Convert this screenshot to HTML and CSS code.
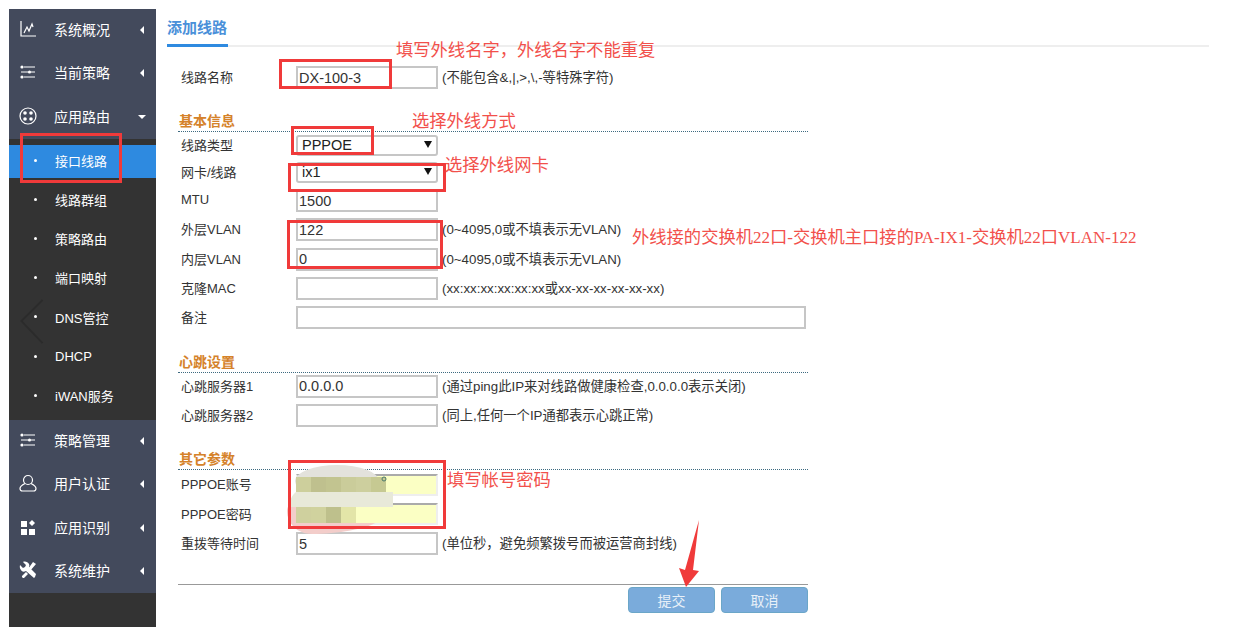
FILE: index.html
```html
<!DOCTYPE html>
<html lang="zh">
<head>
<meta charset="utf-8">
<title>添加线路</title>
<link rel="stylesheet" href="styles.css">
</head>
<body>
<div class="page">
  <nav class="sidebar">
    <div class="menu first"><svg class="ico" viewBox="0 0 16 16"><path d="M1 0v15h15M4 12l3-6 2 4 3-7 1 3" /></svg><span class="mt">系统概况</span><i class="arrow"></i></div>
    <div class="menu"><svg class="ico" viewBox="0 0 16 16"><path d="M4 3h11M1 8h7M11 8h4M4 13h11"/><g class="fill"><circle cx="2" cy="3" r="1.6"/><circle cx="9.5" cy="8" r="1.6"/><circle cx="2" cy="13" r="1.6"/></g></svg><span class="mt">当前策略</span><i class="arrow"></i></div>
    <div class="menu"><svg class="ico big" viewBox="0 0 18 18"><circle cx="9" cy="9" r="8"/><g class="fill"><circle cx="6" cy="6" r="1.8"/><circle cx="12" cy="6" r="1.8"/><circle cx="6" cy="12" r="1.8"/><circle cx="12" cy="12" r="1.8"/></g></svg><span class="mt">应用路由</span><i class="arrow down"></i></div>
    <div class="sub">
      <div class="item on">接口线路</div>
      <div class="item">线路群组</div>
      <div class="item">策略路由</div>
      <div class="item">端口映射</div>
      <div class="item">DNS管控</div>
      <div class="item">DHCP</div>
      <div class="item">iWAN服务</div>
    </div>
    <div class="menu"><svg class="ico" viewBox="0 0 16 16"><path d="M4 3h11M1 8h7M11 8h4M4 13h11"/><g class="fill"><circle cx="2" cy="3" r="1.6"/><circle cx="9.5" cy="8" r="1.6"/><circle cx="2" cy="13" r="1.6"/></g></svg><span class="mt">策略管理</span><i class="arrow"></i></div>
    <div class="menu"><svg class="ico big" viewBox="0 0 18 18"><circle cx="9" cy="6" r="4.5"/><path d="M6 9.500C3 11 1 12 1 14.500 1 16 2 17 3.500 17h11c1.500 0 2.500-1 2.500-2.500 0-2.500-2-3.500-5-5"/></svg><span class="mt">用户认证</span><i class="arrow"></i></div>
    <div class="menu"><svg class="ico" viewBox="0 0 16 16"><g class="fill"><rect x="1" y="2" width="6" height="6"/><rect x="1" y="10" width="6" height="6"/><rect x="9" y="10" width="6" height="6"/><path d="M12 1l3 3-3 3-3-3z"/></g></svg><span class="mt">应用识别</span><i class="arrow"></i></div>
    <div class="menu"><svg class="ico big" viewBox="0 0 18 18"><g class="fill"><path d="M1 4l3 3 2-1 1-2-3-3c2-1 5 0 6 2 .5 1 .5 2 0 3l7 7-1 3-1 1-8-7c-2 1-4 1-5-1-1-1-1.500-3-1-5z"/><path d="M14 1l3 2-6 7-2-2zM7 11l2 2-4 4c-1 .5-2.500-1-2-2z"/></g></svg><span class="mt">系统维护</span><i class="arrow"></i></div>
  </nav>
  <main class="main">
    <div class="tabs"><span class="tab">添加线路</span></div>
    <form class="form">
      <div class="row"><label>线路名称</label><input class="in" value="DX-100-3"><span class="note">(不能包含&amp;,|,&gt;,\,-等特殊字符)</span></div>
      <h3 class="sect s1">基本信息</h3>
      <div class="row r26"><label>线路类型</label><div class="sel">PPPOE<i></i></div></div>
      <div class="row r28"><label>网卡/线路</label><div class="sel">ix1<i></i></div></div>
      <div class="row"><label>MTU</label><input class="in" value="1500"></div>
      <div class="row"><label>外层VLAN</label><input class="in" value="122"><span class="note">(0~4095,0或不填表示无VLAN)</span></div>
      <div class="row r30"><label>内层VLAN</label><input class="in" value="0"><span class="note">(0~4095,0或不填表示无VLAN)</span></div>
      <div class="row"><label>克隆MAC</label><input class="in"><span class="note">(xx:xx:xx:xx:xx:xx或xx-xx-xx-xx-xx-xx)</span></div>
      <div class="row"><label>备注</label><input class="in wide"></div>
      <h3 class="sect s2">心跳设置</h3>
      <div class="row r26"><label>心跳服务器1</label><input class="in" value="0.0.0.0"><span class="note">(通过ping此IP来对线路做健康检查,0.0.0.0表示关闭)</span></div>
      <div class="row r32"><label>心跳服务器2</label><input class="in"><span class="note">(同上,任何一个IP通都表示心跳正常)</span></div>
      <h3 class="sect s3">其它参数</h3>
      <div class="row"><label>PPPOE账号</label><input class="in yl"></div>
      <div class="row r30"><label>PPPOE密码</label><input class="in yl"></div>
      <div class="row"><label>重拨等待时间</label><input class="in" value="5"><span class="note">(单位秒，避免频繁拨号而被运营商封线)</span></div>
      <div class="foot">
        <button type="button" class="btn">提交</button>
        <button type="button" class="btn">取消</button>
      </div>
    </form>
  </main>
</div>

<svg class="chev" viewBox="0 0 28 50"><path d="M25 1L3 23l22 23"/></svg>
<svg class="mosaic" viewBox="0 0 160 75" width="160" height="75">
  <ellipse cx="50" cy="20" rx="42" ry="16" fill="#e3e2dc"/>
  <path d="M9 40H92V60C80 68 50 73 25 73 10 73 0 62 0 50 0 45 4 41 9 40z" fill="#f3cdca"/>
  <path d="M9 31H106V46H2C2 40 5 34 9 31z" fill="#e8e9d9"/>
  <g>
    <rect x="9" y="16" width="15" height="15" fill="#cdcf9c"/><rect x="24" y="16" width="15" height="15" fill="#bfc08e"/><rect x="39" y="16" width="15" height="15" fill="#c2c490"/><rect x="54" y="16" width="15" height="15" fill="#cacc9a"/><rect x="69" y="16" width="15" height="15" fill="#cdcf9e"/><rect x="84" y="16" width="15" height="15" fill="#c6c992"/>
    <rect x="9" y="46" width="15" height="16" fill="#cfd09e"/><rect x="24" y="46" width="15" height="16" fill="#d0d29e"/><rect x="39" y="46" width="15" height="16" fill="#bec08c"/><rect x="54" y="46" width="15" height="16" fill="#e3e5a8"/>
    <rect x="69" y="46" width="23" height="16" fill="#fbffc4"/>
  </g>
  <circle cx="97" cy="18" r="2" fill="none" stroke="#4a7a6a"/>
</svg>

<div class="box b1"></div>
<div class="box b2"></div>
<div class="box b3"></div>
<div class="box b4"></div>
<div class="box b5"></div>
<div class="box b7"></div>

<span class="tip t1">填写外线名字，外线名字不能重复</span>
<span class="tip t2">选择外线方式</span>
<span class="tip t3">选择外线网卡</span>
<span class="tip t4">外线接的交换机<span class="lat">22</span>口<span class="lat">-</span>交换机主口接的<span class="lat">PA-IX1-</span>交换机<span class="lat">22</span>口<span class="lat">VLAN-122</span></span>
<span class="tip t5">填写帐号密码</span>

<svg class="red-arrow" viewBox="0 0 21 68" width="21" height="68"><path d="M20 0L14 50 20 51 7 67 0 48 6 50z"/></svg>
</body>
</html>
```
FILE: styles.css
```css
* { box-sizing: border-box; }
html, body { margin: 0; padding: 0; height: 627px; overflow: hidden; background: #fff; }
body { font-family: "Liberation Sans", "Noto Sans CJK SC", sans-serif; font-size: 12px; color: #333; position: relative; }
.page { display: flex; padding: 9px 0 0 9px; height: 627px; }

.sidebar { width: 147px; height: 618px; background: #333; flex: none; }
.menu { height: 43.3px; background: #434a5c; color: #fff; display: flex; align-items: center; font-size: 14px; padding: 0 0 3px 11px; position: relative; }
.ico { width: 16px; height: 16px; fill: none; stroke: #fff; stroke-width: 1.2; margin-right: 18px; flex: none; }
.ico.big { width: 18px; height: 18px; margin-left: -1px; margin-right: 17px; }
.ico .fill { fill: #fff; stroke: none; }
.arrow { position: absolute; left: 131px; top: 17px; width: 0; height: 0; border-style: solid; border-width: 4px 4px 4px 0; border-color: transparent #fff transparent transparent; }
.arrow.down { left: 129px; top: 19px; border-width: 4px 4px 0 4px; border-color: #fff transparent transparent transparent; }
.sub { padding-top: 6px; padding-bottom: 5px; }
.item { height: 39.2px; color: #fff; display: flex; align-items: center; padding-left: 46px; position: relative; font-size: 13px; }
.item::before { content: ""; position: absolute; left: 25px; top: 18px; width: 3px; height: 3px; background: #fff; border-radius: 50%; }
.item.on { background: #2e8ae0; height: 33px; margin-bottom: 2px; padding-bottom: 2px; }
.item.on::before { top: 14px; }

.main { width: 1053px; padding-left: 11px; flex: none; }
.tabs { height: 38px; border-bottom: 2px solid #eee; display: flex; }
.tab { height: 38px; width: 61px; border-bottom: 3px solid #2e8ae0; color: #4a90d9; font-weight: bold; font-size: 15px; line-height: 38px; white-space: nowrap; }

.form { width: 641px; padding-left: 11px; padding-top: 16px; }
.row { height: 29px; display: flex; align-items: center; padding-left: 3px; color: #333; }
.row.r26 { height: 26px; }
.row.r28 { height: 28px; }
.row.r30 { height: 30px; }
.row.r32 { height: 32px; }
.row label { width: 115px; flex: none; font-size: 13px; padding-bottom: 2px; }
.in { width: 142px; height: 23px; border: 2px solid #c6c6c6; background: #fff; padding: 0 0 0 1px; font: 14.5px "Liberation Sans", sans-serif; color: #333; flex: none; outline: none; }
.in.wide { width: 510px; }
.in.yl { background: #fbffc4; border-color: #aaa #eee #eee #eee; height: 22px; }
.sel { width: 142px; height: 21px; border: 2px solid #c6c6c6; border-radius: 3px; padding-left: 4px; font-size: 14.5px; line-height: 17px; position: relative; background: #fff; color: #222; }
.sel i { position: absolute; right: 4px; top: 4px; width: 0; height: 0; border-style: solid; border-width: 7px 4px 0 4px; border-color: #111 transparent transparent transparent; }
.note { margin-left: 4px; padding-bottom: 2px; font-size: 13.3px; white-space: nowrap; color: #333; }

.sect { margin: 0; height: 22px; font-size: 14px; line-height: 22px; font-weight: bold; color: #d5822a; border-bottom: 1px dotted #3d6a80; padding-left: 1px; }
.s1 { margin-top: 18px; }
.s2 { margin-top: 19px; }
.s3 { margin-top: 17px; }

.foot { margin-top: 26px; border-top: 1px solid #999; height: 30px; display: flex; justify-content: flex-end; gap: 6px; padding-top: 2px; }
.btn { width: 87px; height: 26px; background: #7aabdb; border: 1px solid #6ba6c8; border-radius: 4px; color: #e8f0f8; font: 14px "Liberation Sans", "Noto Sans CJK SC", sans-serif; padding: 0; }

.chev { position: absolute; left: 18px; top: 299px; width: 28px; height: 48px; fill: none; stroke: #2b2b2b; stroke-width: 2; }
.mosaic { position: absolute; left: 287px; top: 461px; }

.box { position: absolute; border: 3px solid #f03a3a; }
.b1 { left: 20px; top: 133px; width: 102px; height: 50px; }
.b2 { left: 279px; top: 59px; width: 113px; height: 30px; }
.b3 { left: 291px; top: 126px; width: 83px; height: 29px; }
.b4 { left: 288px; top: 163px; width: 158px; height: 29px; }
.b5 { left: 287px; top: 220px; width: 156px; height: 49px; }
.b7 { left: 288px; top: 460px; width: 158px; height: 69px; }

.tip { position: absolute; color: #f2504b; font-size: 17.3px; line-height: 22px; white-space: nowrap; font-family: "Noto Sans CJK SC", sans-serif; }
.t1 { left: 396px; top: 38px; }
.t2 { left: 412px; top: 109px; }
.t3 { left: 445px; top: 153px; }
.t4 { left: 632px; top: 225px; }
.lat { font-family: "Liberation Serif", serif; font-size: 17px; }
.t5 { left: 447px; top: 468px; }

.red-arrow { position: absolute; left: 679px; top: 520px; fill: #f03a3a; }
```
